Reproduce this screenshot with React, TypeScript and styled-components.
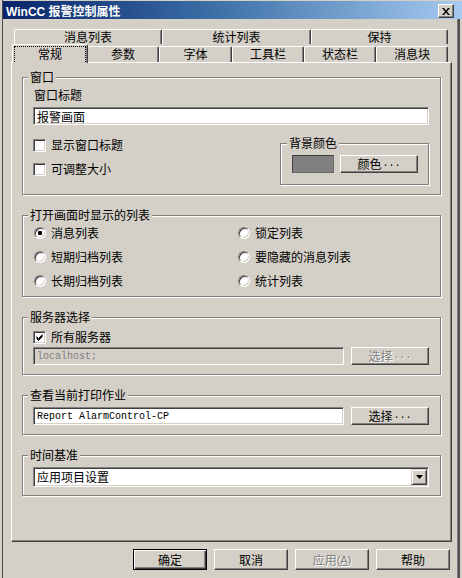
import React from "react";
import styled, { createGlobalStyle } from "styled-components";

const FACE = "#d4d0c8";
const CJK = `"Noto Sans CJK SC", "Liberation Sans", sans-serif`;
const MONO = `"Liberation Mono", "DejaVu Sans Mono", monospace`;

const GlobalStyle = createGlobalStyle`
  html, body { margin: 0; padding: 0; background: ${FACE}; }
  body { font-family: ${CJK}; font-size: 12px; color: #000; }
  * { box-sizing: border-box; }
`;

const Frame = styled.div`
  width: 462px;
  height: 578px;
  display: flex;
  background: ${FACE};
  overflow: hidden;
`;

const LeftEdge = styled.div`
  width: 3px;
  flex: none;
  border-right: 1px solid #4a4a4a;
`;

const Main = styled.div`
  flex: 1;
  display: flex;
  flex-direction: column;
  min-width: 0;
`;

const TitleBar = styled.div`
  height: 18px;
  margin-top: 1px;
  flex: none;
  display: flex;
  align-items: flex-start;
  padding-left: 3px;
  background: linear-gradient(to right, #0a246a 0%, #3a6ea5 45%, #a6caf0 100%);
  color: #fff;
`;

const TitleText = styled.div`
  margin-top: 5px;
  font-family: "Liberation Sans", ${CJK};
  font-weight: bold;
  font-size: 12px;
  line-height: 12px;
  white-space: nowrap;
`;

const CloseButton = styled.div`
  margin: 3px 8px 0 auto;
  width: 16px;
  height: 14px;
  background: ${FACE};
  border: 1px solid;
  border-color: #fff #404040 #404040 #fff;
  box-shadow: inset -1px -1px 0 #808080;
  display: flex;
  align-items: center;
  justify-content: center;
`;

const Body = styled.div`
  flex: 1;
  display: flex;
`;

const Content = styled.div`
  flex: 1;
  display: flex;
  flex-direction: column;
  padding: 0 5px 0 8px;
`;

const RightEdge = styled.div`
  width: 5px;
  flex: none;
  background: linear-gradient(to right, #7a7a7a 0 1px, #505050 1px 3px, ${FACE} 3px);
`;

const TabStrip = styled.div`
  margin: 10px 4px 0 3px;
  display: flex;
  flex-direction: column;
`;

const BackRow = styled.div`
  display: flex;
  height: 15px;
`;

const BackTab = styled.div<{ $w: number }>`
  width: ${(p) => p.$w}px;
  flex: none;
  border: 1px solid;
  border-bottom: none;
  border-color: #fff #404040 transparent #fff;
  border-radius: 2px 2px 0 0;
  box-shadow: inset -1px 0 0 #808080;
  text-align: center;
  line-height: 14px;
  white-space: nowrap;
`;

const FrontRow = styled.div`
  display: flex;
  height: 18px;
  align-items: flex-end;
`;

const FrontTab = styled.div<{ $w: number; $active?: boolean }>`
  width: ${(p) => p.$w + (p.$active ? 3 : 0)}px;
  height: ${(p) => (p.$active ? 19 : 16)}px;
  margin: 0 ${(p) => (p.$active ? -1 : 0)}px ${(p) => (p.$active ? -1 : 0)}px
    ${(p) => (p.$active ? -2 : 0)}px;
  flex: none;
  position: relative;
  z-index: ${(p) => (p.$active ? 1 : 0)};
  background: ${FACE};
  border: 1px solid;
  border-bottom: none;
  border-color: #fff #404040 transparent #fff;
  border-radius: 2px 2px 0 0;
  box-shadow: inset -1px 0 0 #808080;
  text-align: center;
  line-height: 14px;
  white-space: nowrap;
`;

const FocusLabel = styled.span`
  display: block;
  margin: 1px 1px 0 1px;
  height: 16px;
  border: 1px dotted #000;
  border-bottom: none;
  line-height: 14px;
`;

const Panel = styled.div`
  height: 480px;
  flex: none;
  border: 1px solid;
  border-color: #fff #404040 #404040 #fff;
  box-shadow: inset -1px -1px 0 #808080;
  padding: 7px 10px 0 10px;
  display: flex;
  flex-direction: column;
`;

const Group = styled.fieldset<{
  $mt?: number;
  $pt: number;
  $pb: number;
  $pl?: number;
  $pr?: number;
  $w?: number;
}>`
  margin: ${(p) => p.$mt ?? 0}px 0 0 0;
  padding: ${(p) => p.$pt}px ${(p) => p.$pr ?? 11}px ${(p) => p.$pb}px
    ${(p) => p.$pl ?? 10}px;
  border: 1px solid #808080;
  box-shadow: inset 1px 1px 0 #fff, 1px 1px 0 #fff;
  min-width: 0;
  ${(p) => (p.$w ? `width: ${p.$w}px; flex: none;` : "")}
`;

const Legend = styled.legend`
  padding: 0 2px;
  margin-left: -5px;
  line-height: 14px;
  background: ${FACE};
  white-space: nowrap;
`;

const FieldLabel = styled.div`
  line-height: 14px;
  padding-left: 1px;
`;

const Field = styled.div<{ $mt?: number; $disabled?: boolean; $mono?: boolean }>`
  margin-top: ${(p) => p.$mt ?? 0}px;
  height: 18px;
  flex: 1;
  min-width: 0;
  display: flex;
  align-items: center;
  padding-left: 1px;
  background: ${(p) => (p.$disabled ? FACE : "#fff")};
  border: 1px solid;
  border-color: #808080 #fff #fff #808080;
  box-shadow: inset 1px 1px 0 #404040, inset -1px -1px 0 ${FACE};
  color: ${(p) => (p.$disabled ? "#808080" : "#000")};
  font-family: ${(p) => (p.$mono ? MONO : CJK)};
  font-size: ${(p) => (p.$mono ? "10px" : "12px")};
  white-space: nowrap;
  & > span {
    padding-left: 2px;
  }
`;

const WindowOptions = styled.div`
  margin-top: 11px;
  display: flex;
  justify-content: space-between;
  align-items: flex-start;
`;

const CheckList = styled.div`
  display: flex;
  flex-direction: column;
  gap: 10px;
  padding-top: 2px;
`;

const CheckRow = styled.div`
  display: flex;
  align-items: center;
  gap: 5px;
  height: 14px;
  line-height: 14px;
`;

const Box = styled.span`
  width: 13px;
  height: 13px;
  flex: none;
  background: #fff;
  border: 1px solid;
  border-color: #808080 #fff #fff #808080;
  box-shadow: inset 1px 1px 0 #404040, inset -1px -1px 0 ${FACE};
  display: block;
  position: relative;
  & > svg {
    position: absolute;
    left: -1px;
    top: -1px;
  }
`;

const ColorRow = styled.div`
  display: flex;
  gap: 6px;
`;

const Swatch = styled.div`
  width: 42px;
  height: 18px;
  flex: none;
  background: #808080;
  border: 1px solid;
  border-color: #404040 #6a6a6a #6a6a6a #404040;
`;

const Button = styled.div<{ $w: number; $h?: number; $disabled?: boolean; $default?: boolean }>`
  width: ${(p) => p.$w}px;
  height: ${(p) => p.$h ?? 18}px;
  flex: none;
  display: flex;
  align-items: center;
  justify-content: center;
  background: ${FACE};
  border: 1px solid;
  border-color: ${(p) => (p.$default ? "#000" : "#fff #404040 #404040 #fff")};
  box-shadow: ${(p) =>
    p.$default
      ? "inset 1px 1px 0 #fff, inset -1px -1px 0 #404040, inset -2px -2px 0 #808080"
      : "inset -1px -1px 0 #808080"};
  color: ${(p) => (p.$disabled ? "#808080" : "#000")};
  text-shadow: ${(p) => (p.$disabled ? "1px 1px 0 #fff" : "none")};
  white-space: nowrap;
  line-height: 14px;
`;

const Dots = styled.span`
  margin-left: 1px;
  font-family: ${MONO};
  font-size: 10px;
`;

const Mnemonic = styled.span`
  font-family: "Liberation Sans", sans-serif;
  font-size: 11px;
  & u {
    text-decoration: underline;
  }
`;

const RadioGrid = styled.div`
  display: grid;
  grid-template-columns: 204px 1fr;
  row-gap: 10px;
`;

const RadioRow = styled.div`
  display: flex;
  align-items: center;
  gap: 5px;
  padding-left: 1px;
  height: 14px;
  line-height: 14px;
`;

const Radio = styled.span<{ $checked?: boolean }>`
  width: 12px;
  height: 12px;
  flex: none;
  border-radius: 50%;
  background: #fff;
  border: 1px solid;
  border-color: #808080 #fff #fff #808080;
  box-shadow: inset 1px 1px 0 #404040, inset -1px -1px 0 ${FACE};
  display: flex;
  align-items: center;
  justify-content: center;
  &::after {
    content: "";
    width: 4px;
    height: 4px;
    border-radius: 1px;
    background: ${(p) => (p.$checked ? "#000" : "transparent")};
  }
`;

const InputRow = styled.div<{ $mt?: number }>`
  margin-top: ${(p) => p.$mt ?? 0}px;
  display: flex;
  gap: 7px;
  align-items: flex-start;
`;

const Combo = styled.div`
  height: 20px;
  display: flex;
  align-items: center;
  background: #fff;
  border: 1px solid;
  border-color: #808080 #fff #fff #808080;
  box-shadow: inset 1px 1px 0 #404040, inset -1px -1px 0 ${FACE};
  padding: 1px 1px 1px 2px;
`;

const ComboText = styled.div`
  flex: 1;
  line-height: 14px;
  padding-left: 1px;
`;

const DropButton = styled.div`
  width: 16px;
  height: 16px;
  flex: none;
  background: ${FACE};
  border: 1px solid;
  border-color: ${FACE} #404040 #404040 ${FACE};
  box-shadow: inset 1px 1px 0 #fff, inset -1px -1px 0 #808080;
  display: flex;
  align-items: center;
  justify-content: center;
`;

const ButtonBar = styled.div`
  margin-top: 7px;
  padding-right: 2px;
  display: flex;
  justify-content: flex-end;
  gap: 7px;
`;

const CheckMark = () => (
  <svg width="13" height="13" viewBox="0 0 13 13">
    <path d="M3.5 5.5 L5.5 7.5 L9.5 3.5 M3.5 6.5 L5.5 8.5 L9.5 4.5 M3.5 7.5 L5.5 9.5 L9.5 5.5" stroke="#000" strokeWidth="1" fill="none" />
  </svg>
);

const CloseGlyph = () => (
  <svg width="8" height="7" viewBox="0 0 8 7">
    <path d="M0 0 L2 0 L4 2.5 L6 0 L8 0 L5 3.5 L8 7 L6 7 L4 4.5 L2 7 L0 7 L3 3.5 Z" fill="#000" />
  </svg>
);

const Arrow = () => (
  <svg width="7" height="4" viewBox="0 0 7 4">
    <path d="M0 0 H7 L3.5 4 Z" fill="#000" />
  </svg>
);

const Check = ({ checked, label }: { checked?: boolean; label: string }) => (
  <CheckRow>
    <Box>{checked && <CheckMark />}</Box>
    <span>{label}</span>
  </CheckRow>
);

const RadioItem = ({ checked, label }: { checked?: boolean; label: string }) => (
  <RadioRow>
    <Radio $checked={checked} />
    <span>{label}</span>
  </RadioRow>
);

const backTabs = [
  { label: "消息列表", w: 148 },
  { label: "统计列表", w: 149 },
  { label: "保持", w: 137 },
];

const frontTabs = [
  { label: "常规", w: 73 },
  { label: "参数", w: 72 },
  { label: "字体", w: 73 },
  { label: "工具栏", w: 72 },
  { label: "状态栏", w: 72 },
  { label: "消息块", w: 72 },
];

export default function App() {
  return (
    <>
      <GlobalStyle />
      <Frame>
        <LeftEdge />
        <Main>
          <TitleBar>
            <TitleText>WinCC 报警控制属性</TitleText>
            <CloseButton>
              <CloseGlyph />
            </CloseButton>
          </TitleBar>
          <Body>
            <Content>
              <TabStrip>
                <BackRow>
                  {backTabs.map((t) => (
                    <BackTab key={t.label} $w={t.w}>
                      {t.label}
                    </BackTab>
                  ))}
                </BackRow>
                <FrontRow>
                  {frontTabs.map((t, i) => (
                    <FrontTab key={t.label} $w={t.w} $active={i === 0}>
                      {i === 0 ? <FocusLabel>{t.label}</FocusLabel> : t.label}
                    </FrontTab>
                  ))}
                </FrontRow>
              </TabStrip>
              <Panel>
                <Group $pt={4} $pb={9}>
                  <Legend>窗口</Legend>
                  <FieldLabel>窗口标题</FieldLabel>
                  <Field $mt={5}>
                    <span>报警画面</span>
                  </Field>
                  <WindowOptions>
                    <CheckList>
                      <Check label="显示窗口标题" />
                      <Check label="可调整大小" />
                    </CheckList>
                    <Group $w={149} $pt={5} $pb={11} $pl={11} $pr={10}>
                      <Legend>背景颜色</Legend>
                      <ColorRow>
                        <Swatch />
                        <Button $w={78}>
                          颜色<Dots>...</Dots>
                        </Button>
                      </ColorRow>
                    </Group>
                  </WindowOptions>
                </Group>

                <Group $mt={13} $pt={4} $pb={8}>
                  <Legend>打开画面时显示的列表</Legend>
                  <RadioGrid>
                    <RadioItem checked label="消息列表" />
                    <RadioItem label="锁定列表" />
                    <RadioItem label="短期归档列表" />
                    <RadioItem label="要隐藏的消息列表" />
                    <RadioItem label="长期归档列表" />
                    <RadioItem label="统计列表" />
                  </RadioGrid>
                </Group>

                <Group $mt={13} $pt={6} $pb={9}>
                  <Legend>服务器选择</Legend>
                  <Check checked label="所有服务器" />
                  <InputRow $mt={3}>
                    <Field $disabled $mono>
                      <span>localhost;</span>
                    </Field>
                    <Button $w={78} $disabled>
                      选择<Dots>...</Dots>
                    </Button>
                  </InputRow>
                </Group>

                <Group $mt={13} $pt={5} $pb={9}>
                  <Legend>查看当前打印作业</Legend>
                  <InputRow>
                    <Field $mono>
                      <span>Report AlarmControl-CP</span>
                    </Field>
                    <Button $w={78}>
                      选择<Dots>...</Dots>
                    </Button>
                  </InputRow>
                </Group>

                <Group $mt={13} $pt={5} $pb={8}>
                  <Legend>时间基准</Legend>
                  <Combo>
                    <ComboText>应用项目设置</ComboText>
                    <DropButton>
                      <Arrow />
                    </DropButton>
                  </Combo>
                </Group>
              </Panel>
              <ButtonBar>
                <Button $w={74} $h={21} $default>
                  确定
                </Button>
                <Button $w={74} $h={21}>
                  取消
                </Button>
                <Button $w={74} $h={21} $disabled>
                  应用<Mnemonic>
                    (<u>A</u>)
                  </Mnemonic>
                </Button>
                <Button $w={74} $h={21}>
                  帮助
                </Button>
              </ButtonBar>
            </Content>
            <RightEdge />
          </Body>
        </Main>
      </Frame>
    </>
  );
}
